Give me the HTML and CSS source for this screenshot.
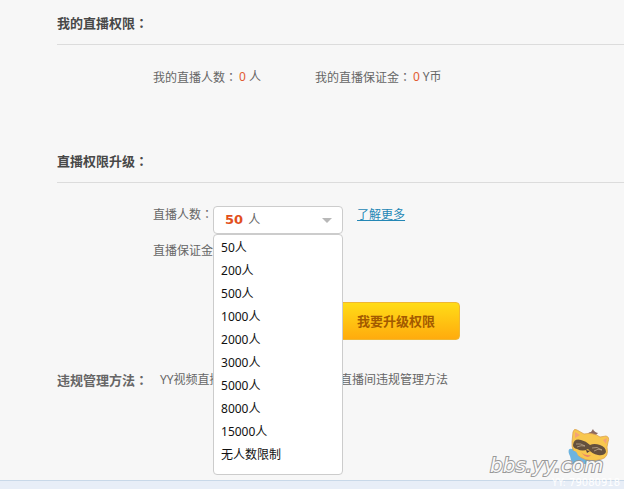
FILE: index.html
```html
<!DOCTYPE html>
<html lang="zh-CN">
<head>
<meta charset="utf-8">
<title>直播权限</title>
<link rel="stylesheet" href="styles.css">
</head>
<body>
<main class="page">
  <section class="panel">
    <h2 class="title">我的直播权限<span class="colon">：</span></h2>
    <dl class="stats">
      <div class="stat"><dt>我的直播人数<span class="colon">：</span></dt><dd><b class="num">0</b>人</dd></div>
      <div class="stat"><dt>我的直播保证金<span class="colon">：</span></dt><dd><b class="num">0</b>Y币</dd></div>
    </dl>
  </section>
  <section class="panel upgrade">
    <h2 class="title">直播权限升级<span class="colon">：</span></h2>
    <form class="form">
      <div class="row">
        <span class="label" id="count-label">直播人数<span class="colon">：</span></span>
        <div class="picker">
          <button class="picker-value" type="button" aria-haspopup="listbox" aria-expanded="true" aria-labelledby="count-label"><strong class="amount">50</strong><span>人</span><i class="caret"></i></button>
          <ul class="menu" role="listbox" aria-labelledby="count-label">
            <li role="option" aria-selected="true">50人</li>
            <li role="option">200人</li>
            <li role="option">500人</li>
            <li role="option">1000人</li>
            <li role="option">2000人</li>
            <li role="option">3000人</li>
            <li role="option">5000人</li>
            <li role="option">8000人</li>
            <li role="option">15000人</li>
            <li role="option">无人数限制</li>
          </ul>
        </div>
        <a class="more" href="#">了解更多</a>
      </div>
      <div class="row deposit"><span class="label">直播保证金</span></div>
      <button class="submit" type="button">我要升级权限</button>
    </form>
  </section>
  <section class="rules">
    <h2 class="title">违规管理方法<span class="colon">：</span></h2>
    <span class="rule-start">YY视频直播</span>
    <span>直播间违规管理方法</span>
  </section>
</main>
<footer class="footer"></footer>
<div class="watermark">
  <svg class="mascot" viewBox="0 0 42 36" aria-hidden="true">
    <path d="M3 21C0 20 0 25 2 28L4 36H31L32 30L14 28L7 20Z" fill="#6db4e0"/>
    <path d="M20 7Q20 4 23 4L25 1Q26 4 30 5L27 8Z" fill="#8c6960"/>
    <path d="M5 4Q6 0 9 2L16 6Q25 4 32 9L38 8Q42 9 40 14L39 19Q41 29 34 31Q22 35 12 29Q3 24 4 14Z" fill="#f8c74e" stroke="#dba253" stroke-width=".8"/>
    <path d="M7 4L12 7L7 10ZM35 12L39 10L38 16Z" fill="#f3a27a"/>
    <path d="M5 17Q6 10 13 12Q18 13 22 17Q26 15 32 17Q38 19 38 24Q36 28 30 27Q24 26 20 21Q15 24 9 21Q5 20 5 17Z" fill="#65503d"/>
    <path d="M8 16Q13 15 17 18M9 19Q13 17 17 18M24 20Q29 18 34 22M26 23Q30 20 34 22" fill="none" stroke="#d5bfa4" stroke-width=".6"/>
    <path d="M18 22L22 23L19 25Z" fill="#4e3b37"/>
    <path d="M13 24Q17 28 23 27Q19 32 13 24Z" fill="#e9826a"/>
    <path d="M3 23Q9 22 10 28Q14 29 13 34L5 35Z" fill="#6db4e0"/>
  </svg>
  <span class="site">bbs.yy.com</span>
  <span class="uid">YY: 79080918</span>
</div>
</body>
</html>
```

FILE: styles.css
```css
* { box-sizing: border-box; }
body {
  margin: 0;
  min-height: 100vh;
  display: flex;
  flex-direction: column;
  position: relative;
  overflow: hidden;
  background: #f7f7f7;
  color: #666;
  font: 12px/20px "Noto Sans", "Noto Sans CJK SC", sans-serif;
}
h2, dl, dd, ul { margin: 0; padding: 0; }
button { font: inherit; cursor: pointer; }
/* Centred full-width colon */
.colon { font-family: "Noto Sans CJK JP", sans-serif; font-feature-settings: "locl" 0; }
.page { flex: 1; padding: 13px 0 0 57px; }
.title { font-size: 13px; line-height: 20px; font-weight: 700; color: #484848; }
.panel > .title { padding-bottom: 11px; border-bottom: 1px solid #dcdcdc; }
.stats { display: flex; gap: 54px; padding: 22px 0 0 96px; }
.stat, .stat dd { display: flex; }
.stat dd { gap: 3px; }
.num { font-weight: 400; color: #e25a31; padding-left: 2px; }
.upgrade { margin-top: 63px; }
.form { padding: 21px 0 0 96px; }
.row { display: flex; align-items: flex-start; height: 37px; }
.picker { position: relative; width: 130px; margin-top: 2px; }
.picker-value {
  display: flex;
  align-items: center;
  gap: 5px;
  width: 100%;
  height: 28px;
  padding: 0 10px 0 11px;
  border: 1px solid #ccc;
  border-radius: 4px;
  background: #fff;
  color: #666;
}
.amount { font: 700 13px/20px "DejaVu Sans", sans-serif; color: #e2501c; }
.caret { margin-left: auto; border: 5px solid transparent; border-top-color: #b8b8b8; border-bottom: 0; }
.menu {
  position: absolute;
  top: 28px;
  left: 0;
  z-index: 2;
  width: 100%;
  padding: 1px 0 8px 7px;
  list-style: none;
  line-height: 23px;
  color: #111;
  background: #fff;
  border: 1px solid #ccc;
  border-radius: 4px;
}
.more { margin: 1px 0 0 14px; color: #2487b5; }
.submit {
  display: block;
  width: 128px;
  height: 38px;
  margin: 24px 0 0 179px;
  border: 1px solid #f0b732;
  border-radius: 4px;
  background: linear-gradient(#ffdc17, #ffab0d);
  color: #a35a00;
  font-size: 13px;
  font-weight: 700;
}
.rules { display: flex; margin-top: 30px; }
.rules .title { color: #666; }
.rule-start { width: 192px; padding-left: 12px; }
.footer { height: 9px; border-top: 1px solid #c8d8e8; background: #e8eef7; }
.watermark { position: absolute; right: 0; bottom: 0; width: 134px; height: 62px; }
.mascot { position: absolute; left: 78px; top: 1px; width: 42px; height: 36px; }
.site {
  position: absolute;
  left: 0;
  top: 26px;
  font: italic 20px/24px "DejaVu Sans", sans-serif;
  color: #fafafa;
  -webkit-text-stroke: 2px #999;
  paint-order: stroke fill;
}
.uid { position: absolute; right: 4px; bottom: 0; font: 10px/12px "DejaVu Sans", sans-serif; color: #fff; }
```
